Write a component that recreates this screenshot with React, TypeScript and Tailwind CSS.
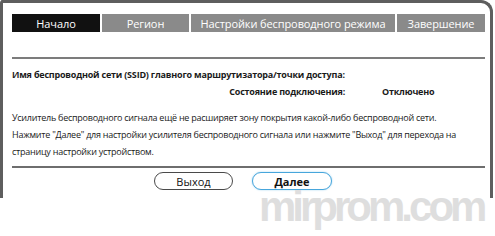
import React from 'react';

const tabs = [
  { label: 'Начало', width: 'w-[88px]', active: true },
  { label: 'Регион', width: 'w-[87px]', active: false },
  { label: 'Настройки беспроводного режима', width: 'w-[204px]', active: false },
  { label: 'Завершение', width: 'w-[88px]', active: false },
];

export default function App() {
  return (
    <div className="relative w-[495px] h-[236px] bg-white overflow-hidden font-['Open_Sans',sans-serif] text-[#1a1a1a]">
      <div className="w-[493px] h-[198px] border-[#5e5e5e] border-l-[3px] border-t-[3px] border-r-[3px] rounded-tl-[3px] rounded-tr-[12px] pl-[9px] pr-[5px] pt-[11px]">
        <div className="flex gap-[2px] h-[18px]">
          {tabs.map((tab) => (
            <div
              key={tab.label}
              className={`${tab.width} flex items-center justify-center text-[11px] leading-none tracking-[-0.1px] text-white ${
                tab.active ? 'bg-[#111111]' : 'bg-[#8a8a8a]'
              }`}
            >
              {tab.label}
            </div>
          ))}
        </div>

        <div className="mt-[25px] h-[2px] bg-[#7c7c7c]" />

        <div className="mt-[9px] text-[9px] leading-[14px] tracking-[-0.2px] font-bold">
          Имя беспроводной сети (SSID) главного маршрутизатора/точки доступа:
        </div>

        <div className="mt-[3px] flex text-[9px] leading-[14px] tracking-[-0.2px] font-bold">
          <div className="w-[333px] text-right">Состояние подключения:</div>
          <div className="ml-[37px]">Отключено</div>
        </div>

        <div className="mt-[10px] text-[9px] leading-[17px] tracking-[-0.25px]">
          <p>Усилитель беспроводного сигнала ещё не расширяет зону покрытия какой-либо беспроводной сети.</p>
          <p className="w-[462px]">
            Нажмите "Далее" для настройки усилителя беспроводного сигнала или нажмите "Выход" для перехода на
            страницу настройки устройством.
          </p>
        </div>

        <div className="mt-[6px] h-[2px] bg-[#6e6e6e]" />

        <div className="mt-[4px] flex gap-[19px] pl-[142px]">
          <button className="w-[79px] h-[18px] rounded-full border-[1.5px] border-[#4a4a4a] bg-white text-[11px] leading-none text-[#111]">
            Выход
          </button>
          <button className="w-[80px] h-[18px] rounded-full border-[1.5px] border-[#47a6dc] bg-white text-[11px] leading-none font-bold text-[#111] shadow-[0_0_2px_#9fd3f0]">
            Далее
          </button>
        </div>
      </div>

      <div className="absolute left-[259px] top-[193px] font-['Liberation_Sans',sans-serif] font-bold text-[42px] leading-[28px] tracking-[-4px] text-[#dedede] select-none">
        mirprom.com
      </div>
    </div>
  );
}
